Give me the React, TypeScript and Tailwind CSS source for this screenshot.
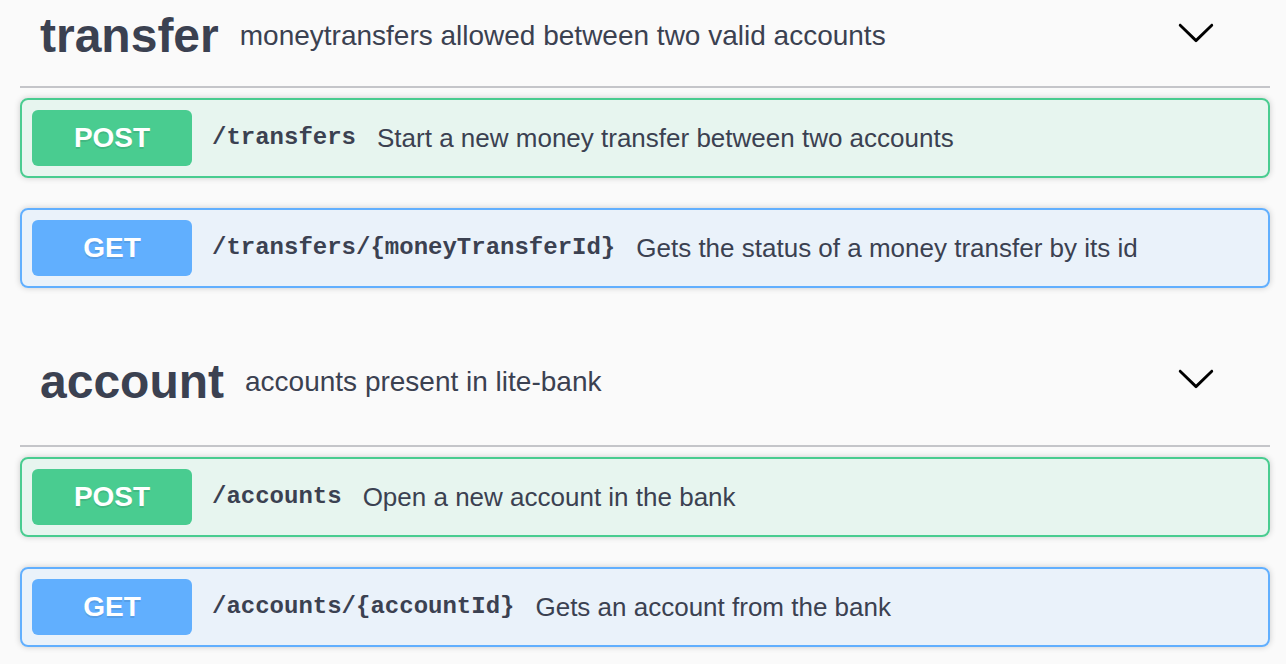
import React from "react";

type Op = {
  method: "POST" | "GET";
  path: string;
  summary: string;
};

type Tag = {
  name: string;
  description: string;
  headerClass: string;
  ops: Op[];
};

const tags: Tag[] = [
  {
    name: "transfer",
    description: "moneytransfers allowed between two valid accounts",
    headerClass: "h-[88px] pb-[14px]",
    ops: [
      { method: "POST", path: "/transfers", summary: "Start a new money transfer between two accounts" },
      { method: "GET", path: "/transfers/{moneyTransferId}", summary: "Gets the status of a money transfer by its id" },
    ],
  },
  {
    name: "account",
    description: "accounts present in lite-bank",
    headerClass: "h-[129px]",
    ops: [
      { method: "POST", path: "/accounts", summary: "Open a new account in the bank" },
      { method: "GET", path: "/accounts/{accountId}", summary: "Gets an account from the bank" },
    ],
  },
];

function Chevron() {
  return (
    <svg width="40" height="40" viewBox="0 0 20 20" className="mb-[8px] mr-[54px] ml-auto shrink-0">
      <path
        d="M17.418 6.109c.272-.268.709-.268.979 0s.271.701 0 .969l-7.908 7.83c-.27.268-.707.268-.979 0l-7.908-7.83c-.27-.268-.27-.701 0-.969.271-.268.709-.268.979 0L10 13.25l7.418-7.141z"
        fill="#000"
      />
    </svg>
  );
}

function OpRow({ op }: { op: Op }) {
  const isPost = op.method === "POST";
  return (
    <div
      className={
        isPost
          ? "flex items-center h-[80px] p-[10px] mb-[30px] rounded-[8px] border-2 border-[#49cc90] bg-[#49cc90]/10 shadow-[0_0_6px_rgba(0,0,0,0.19)]"
          : "flex items-center h-[80px] p-[10px] mb-[30px] rounded-[8px] border-2 border-[#61affe] bg-[#61affe]/10 shadow-[0_0_6px_rgba(0,0,0,0.19)]"
      }
    >
      <div
        className={
          isPost
            ? "w-[160px] h-[56px] rounded-[6px] bg-[#49cc90] flex items-center justify-center text-white font-bold text-[28px] [text-shadow:0_2px_0_rgba(0,0,0,0.1)]"
            : "w-[160px] h-[56px] rounded-[6px] bg-[#61affe] flex items-center justify-center text-white font-bold text-[28px] [text-shadow:0_2px_0_rgba(0,0,0,0.1)]"
        }
      >
        {op.method}
      </div>
      <span className="ml-[20px] font-['Liberation_Mono',monospace] font-bold text-[24px] text-[#3b4151]">
        {op.path}
      </span>
      <span className="ml-[21px] text-[26px] text-[#3b4151]">{op.summary}</span>
    </div>
  );
}

export default function App() {
  return (
    <div className="min-h-[664px] w-full bg-[#fafafa] font-['Liberation_Sans',Arial,sans-serif] overflow-hidden">
      <div className="ml-[20px] w-[1250px]">
        {tags.map((tag) => (
          <section key={tag.name}>
            <div
              className={
                "flex items-center pl-[20px] border-b-2 border-[#c4c5c9] mb-[10px] " + tag.headerClass
              }
            >
              <span className="font-bold text-[48px] text-[#3b4151]">{tag.name}</span>
              <span className="ml-[21px] text-[28px] text-[#3b4151]">{tag.description}</span>
              <Chevron />
            </div>
            {tag.ops.map((op) => (
              <OpRow key={op.path} op={op} />
            ))}
          </section>
        ))}
      </div>
    </div>
  );
}
